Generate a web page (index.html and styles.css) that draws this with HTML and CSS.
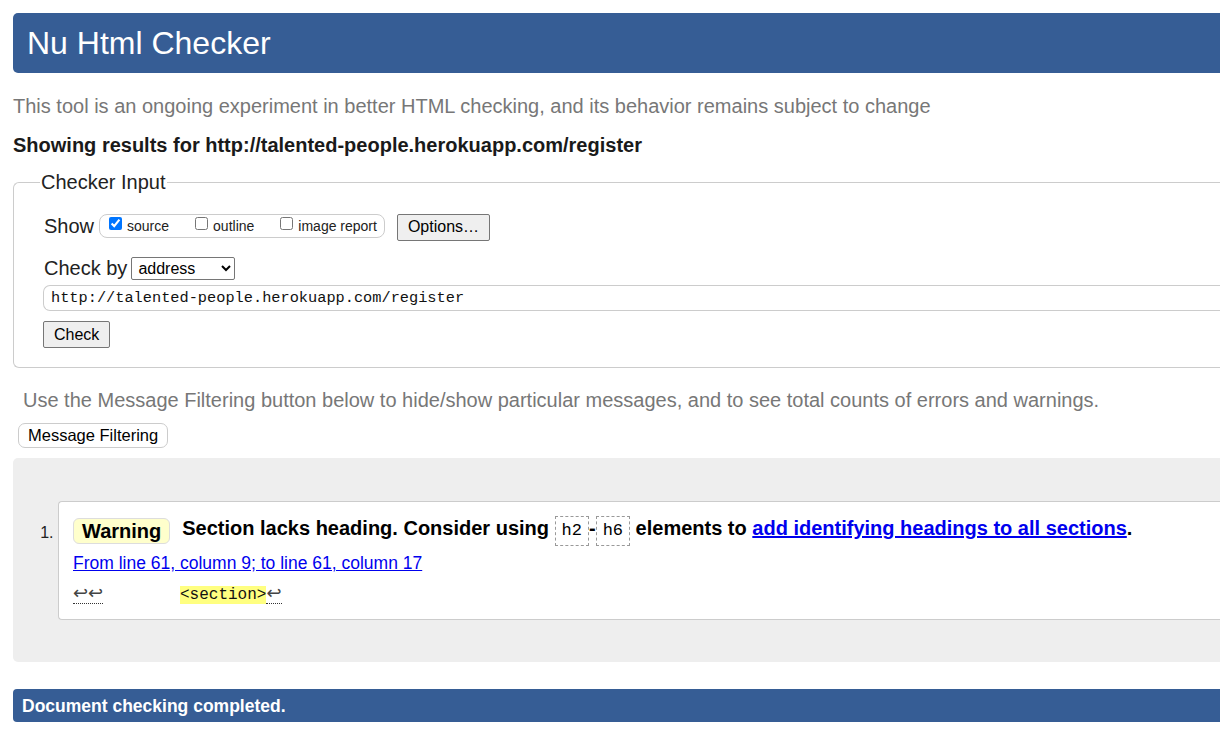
FILE: index.html
```html
<!DOCTYPE html>
<html lang="en">
<head>
<meta charset="utf-8">
<title>Nu Html Checker</title>
<link rel="stylesheet" href="styles.css">
</head>
<body>
<div class="page">
  <h1 class="title-bar">Nu Html Checker</h1>
  <p class="intro">This tool is an ongoing experiment in better HTML checking, and its behavior remains subject to change</p>
  <p class="showing">Showing results for http://talented-people.herokuapp.com/register</p>

  <fieldset class="checker">
    <legend class="checker-legend">Checker Input</legend>
    <div class="row show-row">
      <span class="row-label">Show</span>
      <span class="opts">
        <label class="opt"><input type="checkbox" checked> source</label>
        <label class="opt"><input type="checkbox"> outline</label>
        <label class="opt"><input type="checkbox"> image report</label>
      </span>
      <button class="btn btn-options" type="button">Options…</button>
    </div>
    <div class="row checkby-row">
      <span class="row-label">Check by</span>
      <select class="select">
        <option>address</option>
      </select>
    </div>
    <div class="url-box">http://talented-people.herokuapp.com/register</div>
    <button class="btn btn-check" type="button">Check</button>
  </fieldset>

  <p class="filter-note">Use the Message Filtering button below to hide/show particular messages, and to see total counts of errors and warnings.</p>
  <button class="btn-filter" type="button">Message Filtering</button>

  <div class="results">
    <ol class="msg-list">
      <li class="msg">
        <p class="msg-line">
          <span class="badge">Warning</span>
          <span class="msg-text">Section lacks heading. Consider using <code class="el">h2</code>-<code class="el">h6</code> elements to <a class="msg-link" href="#">add identifying headings to all sections</a>.</span>
        </p>
        <p class="loc"><a class="loc-link" href="#">From line 61, column 9; to line 61, column 17</a></p>
        <p class="extract"><code class="ext"><span class="lf">↩↩</span>        <span class="hl">&lt;section&gt;</span><span class="lf">↩</span></code></p>
      </li>
    </ol>
  </div>

  <div class="done-bar">Document checking completed.</div>
</div>
</body>
</html>
```
FILE: styles.css
```css
html {
  overflow: hidden;
  background: #fff;
}
body {
  margin: 0;
  font-family: "Liberation Sans", Arial, sans-serif;
  color: #222;
}
.page {
  width: 1300px;
  padding: 13px 0 0 13px;
}
.title-bar {
  margin: 0;
  height: 60px;
  box-sizing: border-box;
  padding: 11px 14px 0;
  background: #365d95;
  color: #fff;
  font-weight: normal;
  font-size: 32px;
  line-height: 38px;
  border-radius: 5px 0 0 5px;
}
.intro {
  margin: 21px 0 0;
  font-size: 20px;
  line-height: 24px;
  color: #777;
}
.showing {
  margin: 15px 0 0;
  font-size: 20px;
  line-height: 24px;
  font-weight: bold;
  color: #1a1a1a;
}
.checker {
  margin: 14px 0 0;
  padding: 17px 0 19px 30px;
  border: 1px solid #ccc;
  border-right: none;
  border-radius: 6px 0 0 6px;
  min-width: 0;
}
.checker-legend {
  font-size: 20px;
  padding: 0 1px;
  margin-left: -4px;
  color: #222;
}
.row {
  display: flex;
  align-items: center;
}
.row-label {
  font-size: 20px;
  color: #222;
}
.show-row {
  height: 30px;
}
.opts {
  display: inline-flex;
  align-items: center;
  height: 22px;
  margin-left: 5px;
  padding: 0 7px 0 9px;
  border: 1px solid #ccc;
  border-radius: 8px;
  font-size: 14px;
  color: #222;
  gap: 26px;
}
.opt {
  display: inline-flex;
  align-items: center;
  gap: 2px;
}
.opt input {
  margin: 0 3px 0 0;
  width: 13px;
  height: 13px;
  position: relative;
  top: -3px;
}
.btn {
  font-family: "Liberation Sans", Arial, sans-serif;
  font-size: 16px;
  color: #000;
  background: #efefef;
  border: 1px solid #767676;
  border-radius: 2px;
  padding: 0 10px;
  height: 27px;
}
.btn-options {
  margin-left: 12px;
  position: relative;
  top: 1px;
}
.checkby-row {
  margin-top: 14px;
  height: 26px;
}
.select {
  margin-left: 4px;
  width: 104px;
  height: 23px;
  font-family: "Liberation Sans", Arial, sans-serif;
  font-size: 16px;
  color: #000;
  border: 1px solid #767676;
  border-radius: 2px;
  background: #fff;
  padding: 0 0 0 2px;
}
.url-box {
  margin-top: 4px;
  margin-left: -1px;
  height: 26px;
  box-sizing: border-box;
  border: 1px solid #ccc;
  border-right: none;
  border-radius: 7px 0 0 7px;
  padding: 0 0 0 7px;
  font-family: "Liberation Mono", "Courier New", monospace;
  font-size: 15.3px;
  line-height: 24px;
  color: #111;
}
.btn-check {
  margin-top: 10px;
  margin-left: -1px;
  padding: 0 10px;
}
.filter-note {
  margin: 20px 0 0 10px;
  font-size: 20px;
  line-height: 24px;
  color: #777;
}
.btn-filter {
  display: block;
  margin: 11px 0 0 5px;
  height: 25px;
  padding: 0 9px;
  font-family: "Liberation Sans", Arial, sans-serif;
  font-size: 16.5px;
  color: #000;
  background: #fff;
  border: 1px solid #ccc;
  border-radius: 7px;
}
.results {
  margin-top: 10px;
  background: #eee;
  border-radius: 5px 0 0 5px;
  padding: 43px 0 42px;
}
.msg-list {
  margin: 0;
  padding: 0 0 0 45px;
  font-size: 16px;
  color: #222;
}
.msg {
  background: #fff;
  border: 1px solid #ccc;
  border-right: none;
  border-radius: 4px 0 0 4px;
  padding: 14px 0 13px 14px;
}
.msg::marker {
  font-size: 16px;
}
.msg-line {
  margin: 0;
  display: flex;
  align-items: center;
  height: 30px;
  font-size: 20px;
  font-weight: bold;
  color: #000;
}
.badge {
  display: inline-block;
  height: 26px;
  box-sizing: border-box;
  line-height: 24px;
  padding: 0 8px;
  background: #ffffcc;
  border: 1px solid #ddd;
  border-radius: 6px;
  margin-right: 12px;
}
.el {
  display: inline-block;
  font-family: "Liberation Mono", "Courier New", monospace;
  font-weight: normal;
  font-size: 17px;
  line-height: 28px;
  padding: 0 6px;
  border: 1px dashed #999;
  margin: 0;
}
.msg-link {
  color: #0000ee;
}
.loc {
  margin: 8px 0 0;
  font-size: 17.5px;
  line-height: 19px;
}
.loc-link {
  color: #0000ee;
}
.extract {
  margin: 11px 0 0;
  white-space: pre;
}
.ext {
  font-family: "Liberation Mono", "Courier New", monospace;
  font-size: 16px;
  line-height: 22px;
  color: #111;
}
.lf {
  font-family: "DejaVu Sans", sans-serif;
  font-size: 18px;
  line-height: 18px;
  color: #444;
  border-bottom: 1px dotted #333;
}
.hl {
  background: #ffff80;
}
.done-bar {
  margin-top: 27px;
  height: 33px;
  box-sizing: border-box;
  padding: 7px 9px 0;
  background: #365d95;
  color: #fff;
  font-weight: bold;
  font-size: 17.5px;
  line-height: 20px;
  border-radius: 4px 0 0 4px;
}
```
